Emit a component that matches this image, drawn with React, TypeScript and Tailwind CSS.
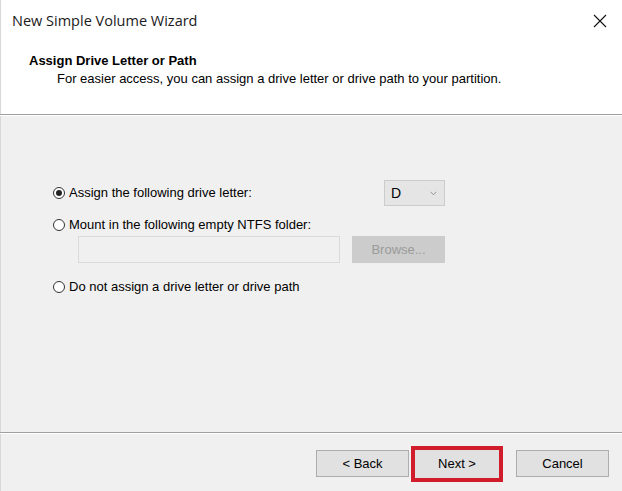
import React from "react";

function Radio({ checked }: { checked?: boolean }) {
  return (
    <span className="relative inline-flex h-[12px] w-[12px] shrink-0 items-center justify-center rounded-full border border-[#333333] bg-white">
      {checked && <span className="h-[6px] w-[6px] rounded-full bg-[#222222]" />}
    </span>
  );
}

export default function App() {
  return (
    <div
      className="flex h-[491px] w-[622px] flex-col overflow-hidden bg-[#f0f0f0] text-[#000000]"
      style={{ fontFamily: '"Liberation Sans", Arial, sans-serif' }}
    >
      {/* Header */}
      <div className="flex h-[114px] shrink-0 flex-col border-l border-[#d8d8d8] bg-white">
        <div className="flex h-[42px] items-center justify-between pl-[11px] pr-[14px]">
          <span
            className="text-[14.5px] text-[#1a1a1a]"
            style={{ fontFamily: '"Open Sans", "Noto Sans", sans-serif' }}
          >
            New Simple Volume Wizard
          </span>
          <svg width="14" height="14" viewBox="0 0 14 14" className="mr-[1px]">
            <path d="M1 1 L13 13 M13 1 L1 13" stroke="#111" strokeWidth="1.1" />
          </svg>
        </div>
        <div className="pl-[28px] pt-[11px] text-[13px] font-bold leading-[16px]">
          Assign Drive Letter or Path
        </div>
        <div className="pl-[56px] pt-[2px] text-[13px] leading-[16px]">
          For easier access, you can assign a drive letter or drive path to your partition.
        </div>
      </div>
      <div className="h-[1px] shrink-0 bg-[#a0a0a0]" />
      <div className="h-[1px] shrink-0 bg-white" />

      {/* Body */}
      <div className="flex flex-1 flex-col border-l border-[#d8d8d8] pl-[52px] pt-[64px]">
        <div className="flex h-[26px] w-[392px] items-center justify-between">
          <label className="flex items-center gap-[4px] text-[13px]">
            <Radio checked />
            <span>Assign the following drive letter:</span>
          </label>
          <div className="flex h-[26px] w-[61px] items-center justify-between border border-[#cccccc] bg-[#e5e5e5] pl-[6px] pr-[7px]">
            <span className="text-[14px]">D</span>
            <svg width="7" height="5" viewBox="0 0 7 5">
              <path d="M0.5 0.8 L3.5 3.8 L6.5 0.8" stroke="#888" strokeWidth="0.9" fill="none" />
            </svg>
          </div>
        </div>
        <label className="mt-[11px] flex h-[16px] items-center gap-[4px] text-[13px]">
          <Radio />
          <span>Mount in the following empty NTFS folder:</span>
        </label>
        <div className="mt-[3px] flex w-[392px] items-center justify-between pl-[25px]">
          <div className="h-[27px] w-[262px] border border-[#dadada] bg-[#f0f0f0]" />
          <div className="flex h-[27px] w-[93px] items-center justify-center bg-[#cccccc] text-[13px] text-[#9a9a9a]">
            Browse...
          </div>
        </div>
        <label className="mt-[16px] flex h-[16px] items-center gap-[4px] text-[13px]">
          <Radio />
          <span>Do not assign a drive letter or drive path</span>
        </label>
      </div>

      <div className="h-[1px] shrink-0 bg-[#a0a0a0]" />
      <div className="h-[1px] shrink-0 bg-white" />

      {/* Footer */}
      <div className="flex h-[57px] shrink-0 items-start border-l border-[#d8d8d8] pl-[315px] pt-[16px]">
        <button className="flex h-[27px] w-[93px] items-center justify-center border border-[#adadad] bg-[#e1e1e1] text-[13px]">
          &lt; Back
        </button>
        <div className="-mt-[4px] ml-[2px] flex h-[36px] w-[92px] items-center justify-center border-[4px] border-[#d11c2b]">
          <button className="flex h-full w-full items-center justify-center bg-[#e1e1e1] text-[13px]">
            Next &gt;
          </button>
        </div>
        <button className="ml-[13px] flex h-[27px] w-[93px] items-center justify-center border border-[#adadad] bg-[#e1e1e1] text-[13px]">
          Cancel
        </button>
      </div>
    </div>
  );
}
